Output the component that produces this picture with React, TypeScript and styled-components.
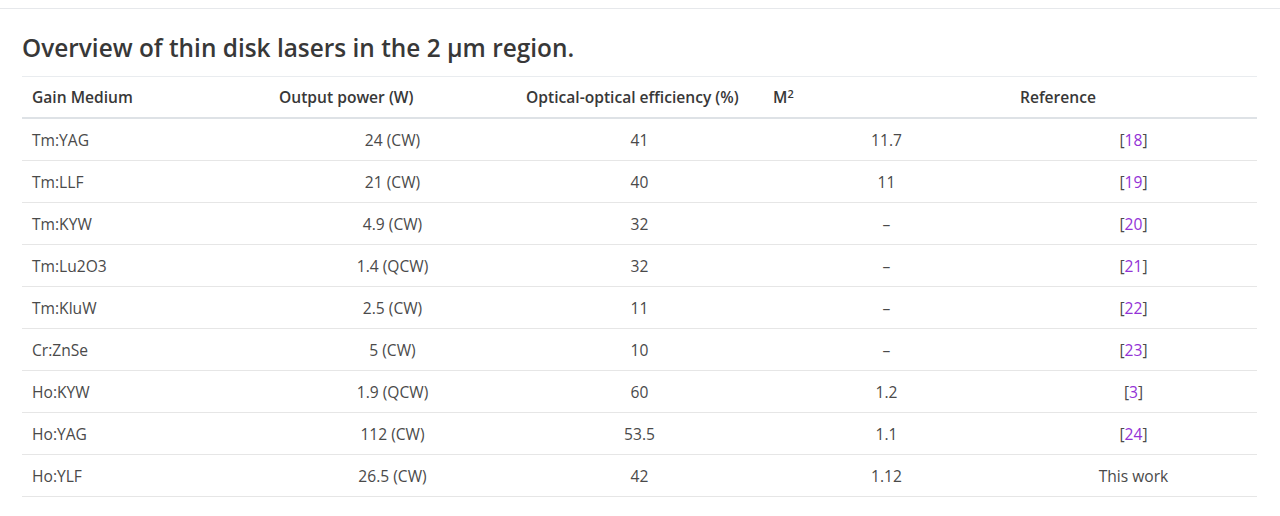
import styled, { createGlobalStyle } from 'styled-components';

interface Row {
  medium: string;
  power: string;
  efficiency: string;
  m2: string;
  ref?: string;
  note?: string;
}

const rows: Row[] = [
  { medium: 'Tm:YAG', power: '24 (CW)', efficiency: '41', m2: '11.7', ref: '18' },
  { medium: 'Tm:LLF', power: '21 (CW)', efficiency: '40', m2: '11', ref: '19' },
  { medium: 'Tm:KYW', power: '4.9 (CW)', efficiency: '32', m2: '–', ref: '20' },
  { medium: 'Tm:Lu2O3', power: '1.4 (QCW)', efficiency: '32', m2: '–', ref: '21' },
  { medium: 'Tm:KluW', power: '2.5 (CW)', efficiency: '11', m2: '–', ref: '22' },
  { medium: 'Cr:ZnSe', power: '5 (CW)', efficiency: '10', m2: '–', ref: '23' },
  { medium: 'Ho:KYW', power: '1.9 (QCW)', efficiency: '60', m2: '1.2', ref: '3' },
  { medium: 'Ho:YAG', power: '112 (CW)', efficiency: '53.5', m2: '1.1', ref: '24' },
  { medium: 'Ho:YLF', power: '26.5 (CW)', efficiency: '42', m2: '1.12', note: 'This work' },
];

const GlobalStyle = createGlobalStyle`
  body {
    margin: 0;
    background: #ffffff;
    font-family: "Open Sans", "Noto Sans", sans-serif;
    color: #333333;
  }
`;

const App = () => {
  return (
    <>
      <GlobalStyle />
      <Page>
        <Section>
          <Caption>Overview of thin disk lasers in the 2 μm region.</Caption>
          <Table>
            <thead>
              <tr>
                <HeadCell>Gain Medium</HeadCell>
                <HeadCell>Output power (W)</HeadCell>
                <HeadCell>Optical-optical efficiency (%)</HeadCell>
                <HeadCell>
                  M<sup>2</sup>
                </HeadCell>
                <HeadCell>Reference</HeadCell>
              </tr>
            </thead>
            <tbody>
              {rows.map((row) => (
                <tr key={row.medium}>
                  <Cell>{row.medium}</Cell>
                  <Cell center>{row.power}</Cell>
                  <Cell center>{row.efficiency}</Cell>
                  <Cell center>{row.m2}</Cell>
                  <Cell center>
                    {row.ref ? (
                      <>
                        [<RefLink href="#">{row.ref}</RefLink>]
                      </>
                    ) : (
                      row.note
                    )}
                  </Cell>
                </tr>
              ))}
            </tbody>
          </Table>
        </Section>
      </Page>
    </>
  );
};

export default App;

const Page = styled.div`
  width: 1280px;
  height: 516px;
  padding-top: 8px;
  box-sizing: border-box;
`;

const Section = styled.section`
  border-top: 1px solid #e6e8eb;
  padding: 23px 23px 0 22px;
`;

const Caption = styled.h2`
  margin: 0 0 12px;
  font-size: 24.4px;
  line-height: 32px;
  font-weight: 600;
  color: #383838;
`;

const Table = styled.table`
  width: 100%;
  border-collapse: collapse;
  table-layout: fixed;
  font-size: 15.6px;
  border-top: 1px solid #e9ecef;

  sup {
    font-size: 11px;
    line-height: 0;
    vertical-align: 5px;
  }
`;

const HeadCell = styled.th`
  text-align: left;
  padding: 0 10px;
  height: 40px;
  font-weight: 600;
  color: #383838;
  border-bottom: 2px solid #dee2e6;
`;

const Cell = styled.td<{ center?: boolean }>`
  text-align: ${(props) => (props.center ? 'center' : 'left')};
  padding: 0 10px;
  height: 41px;
  color: #4a4a4a;
  border-bottom: 1px solid #e6e6e6;
`;

const RefLink = styled.a`
  color: #9333d6;
  text-decoration: none;
`;
